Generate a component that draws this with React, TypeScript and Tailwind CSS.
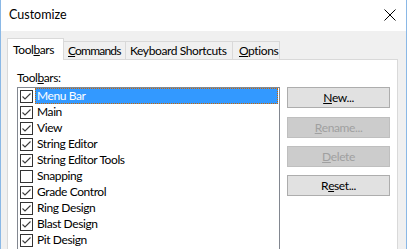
import React from "react";

const font = { fontFamily: 'Lato, "Noto Sans", sans-serif' };

function Check({ checked }: { checked: boolean }) {
  return (
    <div className="w-[13px] h-[13px] border border-[#333333] bg-white flex items-center justify-center shrink-0">
      {checked && (
        <svg width="11" height="11" viewBox="0 0 11 11">
          <path d="M1.5 5.5 L4 8 L9.5 2.5" fill="none" stroke="#3a3a3a" strokeWidth="1.1" />
        </svg>
      )}
    </div>
  );
}

const items: [string, boolean][] = [
  ["Menu Bar", true],
  ["Main", true],
  ["View", true],
  ["String Editor", true],
  ["String Editor Tools", true],
  ["Snapping", false],
  ["Grade Control", true],
  ["Ring Design", true],
  ["Blast Design", true],
  ["Pit Design", true],
];

function Btn({ children, disabled, className }: { children: React.ReactNode; disabled?: boolean; className?: string }) {
  return (
    <div
      className={
        "h-[21px] w-[103px] flex items-center justify-center border text-[12px] tracking-[-0.4px] " +
        (disabled ? "bg-[#cccccc] border-[#bfbfbf] text-[#a0a0a0] " : "bg-[#e1e1e1] border-[#adadad] text-black ") +
        (className ?? "")
      }
    >
      {children}
    </div>
  );
}

export default function App() {
  return (
    <div
      className="w-[407px] h-[249px] overflow-hidden flex flex-col border-l border-r border-[#8ab8e6] bg-[#f0f0f0] text-black"
      style={font}
    >
      <div className="h-[31px] bg-white flex items-center justify-between shrink-0">
        <span className="ml-[8px] text-[12.5px] leading-[16px] -mt-px">Customize</span>
        <svg width="12" height="12" viewBox="0 0 12 12" className="mr-[10px] -mt-[2px]">
          <path d="M0.5 0.5 L11.5 11.5 M11.5 0.5 L0.5 11.5" stroke="#000" strokeWidth="1" />
        </svg>
      </div>
      <div className="flex-1 flex flex-col pt-[7px] pl-[6px] pr-[8px]">
        <div className="flex items-end h-[21px] relative z-10 text-[12px] leading-[16px] tracking-[-0.4px]">
          <div className="h-[22px] w-[57px] -mb-px bg-white border-t border-l border-r border-[#d9d9d9] pl-[5px] pt-[3px]">
            Tool<span className="underline">b</span>ars
          </div>
          <div className="h-[18px] w-[62px] border-t border-r border-[#d9d9d9] pl-[4px] pt-[1px] whitespace-nowrap tracking-[-0.8px]">
            <span className="underline">C</span>ommands
          </div>
          <div className="h-[18px] w-[107px] border-t border-r border-[#d9d9d9] pl-[4px] pt-[1px] whitespace-nowrap">
            Keyboard Shortcuts
          </div>
          <div className="h-[18px] w-[47px] border-t border-r border-[#d9d9d9] pl-[6px] pt-[1px]">
            <span className="underline">O</span>ptions
          </div>
        </div>
        <div className="flex-1 bg-white border border-[#d9d9d9] border-b-0 pl-[9px] pt-[10px] flex flex-col">
          <div className="text-[12px] leading-[16px] h-[17px] tracking-[-0.4px]">
            Tool<span className="underline">b</span>ars:
          </div>
          <div className="flex gap-[7px] flex-1">
            <div className="w-[263px] border border-[#828790] border-b-0 pl-[2px] pr-[1px] shrink-0">
              {items.map(([name, checked], i) => (
                <div key={name} className="h-[16px] flex items-center text-[12px] leading-[16px] tracking-[-0.4px]">
                  <Check checked={checked} />
                  <div
                    className={
                      "ml-[2px] flex-1 h-[16px] pl-[2px] " +
                      (i === 0 ? "bg-[#3399ff] text-white outline-1 outline-dotted outline-[#cc6600] -outline-offset-1" : "")
                    }
                  >
                    {name}
                  </div>
                </div>
              ))}
            </div>
            <div className="flex flex-col">
              <Btn>
                <span className="underline">N</span>ew...
              </Btn>
              <Btn disabled className="mt-[9px]">
                <span className="underline">R</span>ename...
              </Btn>
              <Btn disabled className="mt-[8px]">
                <span className="underline">D</span>elete
              </Btn>
              <Btn className="mt-[8px]">
                R<span className="underline">e</span>set...
              </Btn>
            </div>
          </div>
        </div>
      </div>
    </div>
  );
}
